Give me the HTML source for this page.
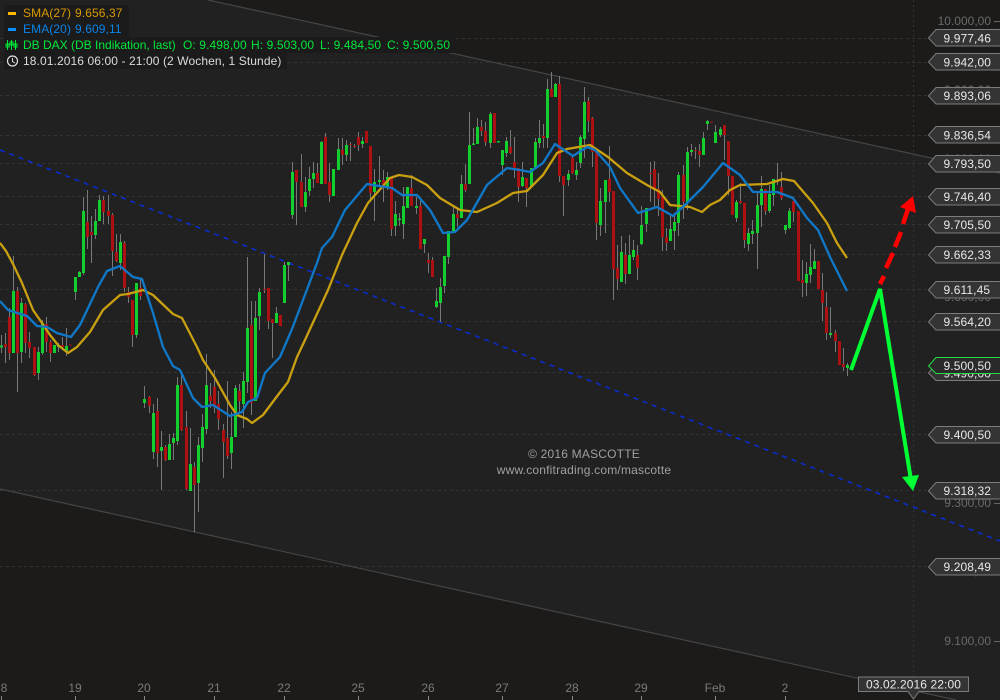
<!DOCTYPE html>
<html><head><meta charset="utf-8"><style>
html,body{margin:0;padding:0;background:#1c1b1a;width:1000px;height:700px;overflow:hidden}
svg{display:block;font-family:"Liberation Sans",sans-serif;font-size:12px}
.ax{fill:#6a6a6a;text-anchor:end}
.t{fill:#7a7a7a;text-anchor:middle}
.l{fill:#e8e8e8;letter-spacing:.1px}
.b{fill:#343434;stroke:#7c7c7c;stroke-width:1}
.s{letter-spacing:.1px}
.w{letter-spacing:.2px}
</style></head><body>
<svg width="1000" height="700" viewBox="0 0 1000 700" xmlns="http://www.w3.org/2000/svg">
<rect width="1000" height="700" fill="#1c1b1a"/>
<polygon points="208,0 1000,173 1000,700 956,700 0,489 0,0" fill="#222122"/>
<polygon points="0,0 208,0 1000,173 1000,0" fill="#1c1b1a"/>
<polygon points="0,489 956,700 0,700" fill="#1c1b1a"/>
<rect x="0" y="0" width="208" height="1" fill="#222122"/>
<path d="M0 38.5H928M0 62.5H928M0 95.5H928M0 135.5H928M0 163.5H928M0 196.5H928M0 224.5H928M0 254.5H928M0 289.5H928M0 321.5H928M0 372.5H928M0 434.5H928M0 490.5H928M0 566.5H928" stroke="#333333" stroke-width="1" stroke-dasharray="3 3" fill="none"/>
<path d="M913.5 0V680" stroke="#333333" stroke-width="1" stroke-dasharray="2 3" fill="none"/>
<path d="M208 0L1000 173" stroke="#454545" stroke-width="1.2" fill="none"/>
<path d="M0 489L956 700" stroke="#454545" stroke-width="1.2" fill="none"/>
<path d="M0 150L1000 541" stroke="#0a2ccc" stroke-width="1.6" stroke-dasharray="5 5" fill="none"/>

<path fill="none" stroke="#787878" stroke-width="1" d="M1.5 335V353M5.5 333V363M9.5 308V360M13.5 256V353M17.5 287V392M21.5 298V363M25.5 303V353M29.5 332V358M34.5 347V376M38.5 347V380M42.5 320V355M46.5 317V352M50.5 340V362M54.5 345V353M58.5 343V352M62.5 337V350M66.5 328V356M75.5 277V300M79.5 271V277M83.5 197V275M87.5 190V249M91.5 216V263M95.5 209V239M99.5 195V221M103.5 196V224M108.5 195V224M112.5 213V276M116.5 234V262M120.5 234V270M124.5 241V292M128.5 287V303M132.5 300V347M136.5 283V338M140.5 278V300M144.5 386V408M149.5 396V413M153.5 404V459M157.5 398V467M161.5 431V490M165.5 445V461M169.5 434V460M173.5 433V460M177.5 377V445M181.5 372V431M186.5 411V490M190.5 428V491M194.5 462V532M198.5 437V512M202.5 414V462M206.5 354V434M210.5 383V408M214.5 370V413M218.5 391V430M223.5 424V478M227.5 381V459M231.5 412V469M235.5 385V437M239.5 384V413M243.5 372V428M247.5 257V393M251.5 301V415M255.5 301V401M259.5 288V330M264.5 254V293M268.5 288V329M272.5 319V358M276.5 307V323M284.5 262V303M288.5 262V281M292.5 162V219M296.5 170V225M301.5 154V207M305.5 177V212M309.5 167V196M313.5 162V188M317.5 163V183M321.5 141V184M325.5 133V184M329.5 163V202M333.5 169V196M338.5 138V170M342.5 138V165M346.5 140V161M350.5 142V161M354.5 144V148M358.5 132V151M362.5 137V148M366.5 131V143M370.5 146V199M374.5 169V221M379.5 156V187M383.5 170V202M387.5 172V190M391.5 178V236M395.5 201V236M399.5 213V226M403.5 187V239M407.5 187V208M411.5 175V206M416.5 197V214M420.5 199V249M424.5 239V253M428.5 253V273M432.5 257V277M436.5 288V308M440.5 278V322M444.5 256V293M448.5 231V264M453.5 207V231M457.5 207V227M461.5 175V218M465.5 164V192M469.5 112V184M473.5 128V145M477.5 118V144M481.5 120V136M485.5 122V146M490.5 112V148M494.5 113V143M502.5 150V175M506.5 137V157M510.5 130V154M514.5 137V178M518.5 168V202M522.5 162V187M526.5 178V207M531.5 168V187M535.5 138V168M539.5 120V148M543.5 124V148M547.5 79V148M551.5 72V97M555.5 83V97M559.5 76V182M563.5 176V216M568.5 170V186M572.5 157V174M576.5 162V180M580.5 135V168M584.5 87V158M588.5 97V132M592.5 117V167M596.5 150V240M600.5 188V236M605.5 180V233M609.5 146V202M613.5 191V300M617.5 245V290M621.5 236V282M625.5 243V284M629.5 235V274M633.5 240V260M637.5 245V280M641.5 206V245M646.5 208V232M650.5 162V202M654.5 161V207M658.5 173V216M662.5 190V251M666.5 228V251M670.5 215V241M674.5 213V250M678.5 172V236M683.5 165V219M687.5 147V210M691.5 144V156M695.5 147V159M699.5 144V167M703.5 132V155M707.5 120V130M715.5 125V143M720.5 127V137M724.5 125V160M728.5 141V195M736.5 200V222M740.5 183V204M744.5 203V248M748.5 228V251M752.5 220V244M757.5 193V269M761.5 176V227M765.5 189V215M769.5 185V213M773.5 179V206M777.5 163V185M781.5 172V200M785.5 225V234M789.5 208V229M793.5 201V222M802.5 260V297M806.5 262V296M810.5 244V283M814.5 249V269M822.5 273V321M826.5 292V340M830.5 307V338M835.5 330V352M843.5 348V371M847.5 363V376"/>

<path fill="none" stroke="#12cf2e" stroke-width="3" d="M1.5 345.5V347.5M13.5 291V353M21.5 303V352M38.5 352V373M42.5 323V353M54.5 345V353M58.5 345V347M66.5 346V352M75.5 277V292M79.5 272V277M83.5 211V273M95.5 221V235M99.5 200V221M120.5 242V263M136.5 283V335M144.5 399V403M153.5 413V452M161.5 447V451M169.5 444V460M173.5 438V443M177.5 385V441M190.5 464V491M198.5 445V483M202.5 427V448M206.5 385V429M231.5 437V453M235.5 388V437M243.5 381V404M247.5 328V382M255.5 318V401M259.5 292V316M276.5 313V323M284.5 265V303M288.5 262V265M292.5 172V215M305.5 192V207M309.5 179V191M313.5 173V179M321.5 142V184M333.5 169V196M338.5 149V170M346.5 145V155M362.5 141V144M374.5 182V192M379.5 180V182M387.5 177V188M395.5 214V226M399.5 218.500V220M403.5 206V224M407.5 187V208M416.5 206V208M424.5 239V244M436.5 301V307M440.5 287V303M444.5 256V286M448.5 231V257M453.5 214V231M461.5 184V218M469.5 145V184M473.5 143.500V145M477.5 127V144M490.5 114V143M498.500 141V142.500M502.5 150V165M506.5 141V153M522.5 177V186M531.5 168V187M535.5 142V168M539.5 138V143M547.5 89V138M555.5 84V97M568.5 174V180M576.5 170V175M580.5 137V163M584.5 102V139M600.5 201V225M605.5 180V202M621.5 252V282M629.5 255V274M633.5 250V257M641.5 225V244M646.5 208V224M670.5 229V241M674.5 222V231M678.5 175V223M687.5 152V202M691.5 150V152M703.5 138V155M707.5 121V124M715.5 132V143M720.5 129V135M736.5 202V218M748.5 233V244M752.5 231V234M757.5 205V233M761.5 189V205M769.5 194V211M773.5 179V195M785.5 225V230M789.5 211V228M806.5 274V283M810.5 267V275M814.5 261V269M830.5 333V335M847.5 365V368"/>

<path fill="none" stroke="#ad1010" stroke-width="3" d="M5.5 344V347M9.5 317V353M17.5 291V353M25.5 304V343M29.5 342V348M34.5 347V375M46.5 324V342M50.5 342V353M62.5 345V347M70.5 344.500V345.500M87.5 222V237M91.5 232V235M103.5 200V212M108.5 211V216M112.5 215V251M116.5 252V261M124.5 243V288M128.5 292V297M132.5 300V335M140.5 288V296M149.5 397V406M157.5 411V453M165.5 447V460M181.5 385V430M186.5 427V489M194.5 467V485M210.5 396V401M214.5 387V407M218.5 404V419M223.5 430V442M227.5 438V456M239.5 391V401M251.5 325V403M264.5 289V290M268.5 288V321M272.5 319V323M280.5 315V326M296.5 170V182M301.5 182V207M317.5 173V183M325.5 137V184M329.5 182V195M342.5 150V155M350.5 144V145M354.5 146V147M358.5 137V145M366.5 131V143M370.5 146V193M383.5 180V188M391.5 178V229M411.5 188V206M420.5 206V249M428.5 260V263M432.5 260V277M457.5 214V218M465.5 184V190M481.5 127V131M485.5 131V142M494.5 113V143M510.5 147V153M514.5 162V168M518.5 168V187M526.5 178V188M543.5 136V138M551.5 89V97M559.5 84V176M563.5 176V185M572.5 158V173M588.5 101V121M592.5 118V152M596.5 150V223M609.5 179V192M613.5 191V269M617.5 268V279M625.5 255V274M637.5 255V268M650.5 173V174M654.5 169V190M658.5 189V199M662.5 197V237M666.5 237V243M683.5 175V202M695.5 150V151M699.5 151V155M711.5 121.500V122.500M724.5 125V135M728.5 141V176M732.5 176V215M740.5 201V203M744.5 203V240M765.5 189V211M777.5 181V182M781.5 187V198M793.5 201V212M798.5 211V281M802.5 280V283M818.5 261V289M822.5 290V303M826.5 307V333M835.5 333V341M839.5 341V365M843.5 364V367"/>

<polyline fill="none" stroke="#c9a010" stroke-width="2.300" stroke-linejoin="round" points="0,243 6,251 13,264 22,283 33,310 42,323 50,335 58,345 68,353 77,347 90,332 103,310 120,295 128,294 143,290 153,295 173,314 182,318 197,347 203,360 215,378 230,405 237,415 247,419 252,423 263,415 278,395 288,382 297,357 305,340 310,329 328,290 342,255 357,223 368,203 390,178 399,175 412,177 427,185 440,198 460,210 477,212 497,203 513,193 527,191 543,175 557,153 567,149 590,145 608,157 627,173 647,185 660,192 670,205 690,207 702,212 710,205 720,200 730,190 740,185 767,184 783,179 794,181 813,203 827,223 837,243 847,258"/>
<polyline fill="none" stroke="#1078c8" stroke-width="2.300" stroke-linejoin="round" points="0,301 8,310 27,316 37,326 47,327 57,333 71,337 80,325 98,287 107,271 120,266 133,277 142,279 153,313 163,347 173,366 180,370 193,398 202,407 213,405 230,416 242,412 248,402 257,398 265,373 280,357 292,329 317,263 322,248 332,237 345,210 367,184 392,188 402,195 417,195 430,210 443,233 455,232 467,220 487,185 507,168 520,170 530,172 543,163 555,144 573,156 587,147 595,150 610,167 620,188 638,213 657,207 673,216 687,203 703,187 723,163 740,175 753,192 777,192 793,198 807,218 818,230 830,257 847,291"/>

<polyline fill="none" stroke="#00ff33" stroke-width="4" stroke-linejoin="miter" points="851,370 880,289 911,480"/>
<polygon points="902,477 919,475 913,491" fill="#00ff33"/>
<path d="M880 284L884 276M886 268L893 253M895 247L901 232M903 224L908 209" stroke="#ff0000" stroke-width="4.500" fill="none"/>
<polygon points="900,207 913,196 916,213" fill="#ff0000"/>

<text class="ax" x="991" y="25">10.000,00</text>
<text class="ax" x="991" y="94">9.900,00</text>
<text class="ax" x="991" y="163">9.800,00</text>
<text class="ax" x="991" y="232">9.700,00</text>
<text class="ax" x="991" y="301">9.600,00</text>
<text class="ax" x="991" y="507">9.300,00</text>
<text class="ax" x="991" y="575">9.200,00</text>
<text class="ax" x="991" y="645">9.100,00</text>
<path d="M994 21.500H1000M994 641.500H1000M994 503.500H1000" stroke="#666" stroke-width="1"/>

<polygon class="b" points="928.500,38 936,29.500 1001,29.500 1001,46 936,46"/><text class="l" x="943.500" y="42.500">9.977,46</text>
<polygon class="b" points="928.500,62 936,53.500 1001,53.500 1001,70 936,70"/><text class="l" x="943.500" y="66.500">9.942,00</text>
<polygon class="b" points="928.500,96 936,87.500 1001,87.500 1001,104 936,104"/><text class="l" x="943.500" y="100">9.893,06</text>
<polygon class="b" points="928.500,135 936,126.500 1001,126.500 1001,143 936,143"/><text class="l" x="943.500" y="139.500">9.836,54</text>
<polygon class="b" points="928.500,164 936,155.500 1001,155.500 1001,172 936,172"/><text class="l" x="943.500" y="168">9.793,50</text>
<polygon class="b" points="928.500,197 936,188.500 1001,188.500 1001,205 936,205"/><text class="l" x="943.500" y="201">9.746,40</text>
<polygon class="b" points="928.500,225 936,216.500 1001,216.500 1001,233 936,233"/><text class="l" x="943.500" y="229">9.705,50</text>
<polygon class="b" points="928.500,255 936,246.500 1001,246.500 1001,263 936,263"/><text class="l" x="943.500" y="259">9.662,33</text>
<polygon class="b" points="928.500,290 936,281.500 1001,281.500 1001,298 936,298"/><text class="l" x="943.500" y="294">9.611,45</text>
<polygon class="b" points="928.500,322 936,313.500 1001,313.500 1001,330 936,330"/><text class="l" x="943.500" y="326">9.564,20</text>
<polygon class="b" points="928.500,373 936,364.500 1001,364.500 1001,380.500 936,380.500"/><text class="l" x="943.500" y="377.500">9.490,00</text>
<polygon points="928.500,366 936,357.500 1001,357.500 1001,373.500 936,373.500" fill="#2a2a2a" stroke="#22dd44" stroke-width="1"/><text class="l" x="943.500" y="370">9.500,50</text>
<polygon class="b" points="928.500,435 936,426.500 1001,426.500 1001,443 936,443"/><text class="l" x="943.500" y="439">9.400,50</text>
<polygon class="b" points="928.500,491 936,482.500 1001,482.500 1001,499 936,499"/><text class="l" x="943.500" y="495">9.318,32</text>
<polygon class="b" points="928.500,567 936,558.500 1001,558.500 1001,575 936,575"/><text class="l" x="943.500" y="571">9.208,49</text>

<text class="w" x="584" y="458" fill="#a0a0a0" text-anchor="middle">© 2016 MASCOTTE</text>
<text class="w" x="584" y="474" fill="#a0a0a0" text-anchor="middle">www.confitrading.com/mascotte</text>

<rect x="4" y="5" width="125" height="32" fill="#1c1b1b"/>
<rect x="4" y="37" width="452" height="16" fill="#1c1b1b"/>
<rect x="4" y="53" width="283" height="16" fill="#1c1b1b"/>
<rect x="8" y="12" width="8" height="3" fill="#ffb800"/>
<rect x="8" y="28" width="8" height="3" fill="#0a90ff"/>
<text class="s" x="23" y="17" fill="#d89a00">SMA(27)</text><text class="s" x="75" y="17" fill="#d89a00">9.656,37</text>
<text class="s" x="23" y="33" fill="#0a84e8">EMA(20)</text><text class="s" x="75" y="33" fill="#0a84e8">9.609,11</text>
<path d="M7.500 40V50M11.500 40V50M15.500 40V50" stroke="#00e83a" stroke-width="1"/>
<rect x="6" y="44" width="3" height="3" fill="none" stroke="#00e83a"/><rect x="10" y="42" width="3" height="3" fill="none" stroke="#00e83a"/><rect x="14" y="44" width="3" height="3" fill="none" stroke="#00e83a"/>
<text x="23" y="49" fill="#00e83a">DB DAX (DB Indikation, last)</text>
<text class="s" x="183" y="49" fill="#00e83a">O: 9.498,00</text>
<text class="s" x="251" y="49" fill="#00e83a">H: 9.503,00</text>
<text class="s" x="320" y="49" fill="#00e83a">L: 9.484,50</text>
<text class="s" x="387" y="49" fill="#00e83a">C: 9.500,50</text>
<circle cx="12.500" cy="61" r="5" fill="none" stroke="#e0e0e0" stroke-width="1.200"/>
<path d="M12.500 58V61.500L15 63" fill="none" stroke="#e0e0e0" stroke-width="1"/>
<text class="s" x="23" y="65" fill="#dcdcdc">18.01.2016 06:00 - 21:00 (2 Wochen, 1 Stunde)</text>

<text class="t" x="4" y="692">8</text><text class="t" x="75" y="692">19</text><text class="t" x="144" y="692">20</text><text class="t" x="214" y="692">21</text><text class="t" x="284" y="692">22</text><text class="t" x="358" y="692">25</text><text class="t" x="428" y="692">26</text><text class="t" x="502" y="692">27</text><text class="t" x="572" y="692">28</text><text class="t" x="641" y="692">29</text><text class="t" x="715" y="692">Feb</text><text class="t" x="785" y="692">2</text>
<path d="M1.500 696V700M75.500 696V700M144.500 696V700M214.500 696V700M284.500 696V700M358.500 696V700M428.500 696V700M502.500 696V700M572.500 696V700M641.500 696V700M715.500 696V700M785.500 696V700" stroke="#888" stroke-width="1"/>

<polygon points="858.500,677 968.500,677 968.500,691.500 919,691.500 913.500,699 908,691.500 858.500,691.500" fill="#343434" stroke="#7c7c7c" stroke-width="1"/>
<text x="913.500" y="688.500" fill="#e8e8e8" text-anchor="middle" style="letter-spacing:.1px">03.02.2016 22:00</text>
</svg>
</body></html>
